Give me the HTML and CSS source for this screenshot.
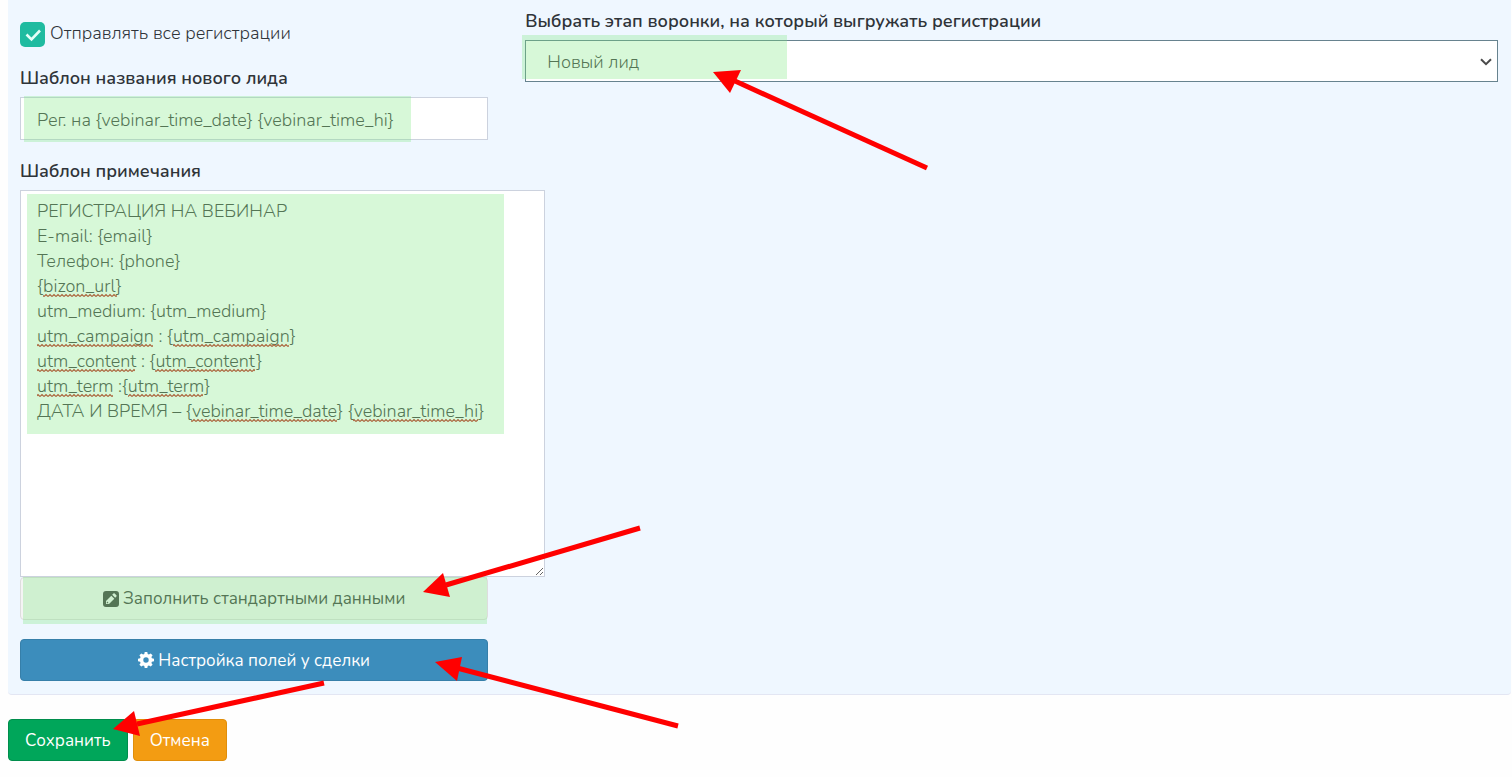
FILE: index.html
```html
<!DOCTYPE html>
<html lang="ru">
<head>
<meta charset="utf-8">
<meta name="viewport" content="width=device-width, initial-scale=1">
<title>Настройка выгрузки регистраций</title>
<link rel="stylesheet" href="styles.css">
</head>
<body>
<main class="page">
  <form class="form">
    <section class="panel">
      <div class="column column-lead">
        <div class="check-row">
          <input class="check" type="checkbox" id="send-all" checked>
          <label for="send-all">Отправлять все регистрации</label>
        </div>
        <div class="field">
          <label class="field-label" for="lead-name">Шаблон названия нового лида</label>
          <div class="control">
            <input class="input" type="text" id="lead-name" value="Рег. на {vebinar_time_date} {vebinar_time_hi}">
            <span class="mark mark-name"></span>
          </div>
        </div>
        <div class="field">
          <label class="field-label" for="note">Шаблон примечания</label>
          <div class="control control-note">
            <textarea class="input note" id="note" spellcheck="false">РЕГИСТРАЦИЯ НА ВЕБИНАР
E-mail: {email}
Телефон: {phone}
{bizon_url}
utm_medium: {utm_medium}
utm_campaign : {utm_campaign}
utm_content : {utm_content}
utm_term :{utm_term}
ДАТА И ВРЕМЯ – {vebinar_time_date} {vebinar_time_hi}</textarea>
            <svg class="spelling" width="525" height="240" aria-hidden="true">
              <defs>
                <pattern id="wave" y="2" width="4" height="5" patternUnits="userSpaceOnUse">
                  <path d="M0 4.500L2 2.500L4 4.500" fill="none" stroke="#c02a20" stroke-width="1.200"/>
                </pattern>
              </defs>
              <g fill="url(#wave)">
                <rect x="23" y="103" width="74" height="4"/>
                <rect x="17" y="153" width="116" height="4"/>
                <rect x="153" y="153" width="116" height="4"/>
                <rect x="17" y="178" width="98" height="4"/>
                <rect x="135" y="178" width="100" height="4"/>
                <rect x="17" y="203" width="76" height="4"/>
                <rect x="108" y="203" width="75" height="4"/>
                <rect x="171" y="228" width="146" height="4"/>
                <rect x="333" y="228" width="125" height="4"/>
              </g>
            </svg>
            <span class="mark mark-note"></span>
          </div>
          <div class="control">
            <button class="btn btn-default btn-block" type="button">
              <svg class="icon" viewBox="0 0 16 16" aria-hidden="true"><path fill="currentColor" fill-rule="evenodd" d="M3 0h10a3 3 0 0 1 3 3v10a3 3 0 0 1-3 3H3a3 3 0 0 1-3-3V3a3 3 0 0 1 3-3zM3 10v3h3l5.300-5.300-3-3zM9.200 3.800l3 3 1.200-1.200a1 1 0 0 0 0-1.300l-1.700-1.700a1 1 0 0 0-1.300 0zM4.200 10.600l1.300 1.300-.5.400H3.800v-1.200z"/></svg>
              Заполнить стандартными данными
            </button>
            <span class="mark mark-fill"></span>
          </div>
        </div>
        <button class="btn btn-primary btn-block" type="button">
          <svg class="icon" viewBox="0 0 16 16" aria-hidden="true"><path fill="currentColor" fill-rule="evenodd" d="M6.700 0h2.600l.4 2.100 1.200.5L12.700 1.400l1.900 1.900-1.200 1.800.5 1.200 2.100.4v2.600l-2.100.4-.5 1.200 1.200 1.800-1.900 1.900-1.800-1.200-1.200.5L9.300 16H6.700l-.4-2.100-1.200-.5-1.800 1.200-1.900-1.900 1.200-1.800-.5-1.200L0 9.300V6.700l2.100-.4.5-1.200L1.400 3.300l1.900-1.900 1.800 1.200 1.200-.5zM8 5.300a2.700 2.700 0 1 0 0 5.400 2.700 2.700 0 0 0 0-5.400z"/></svg>
          Настройка полей у сделки
        </button>
      </div>
      <div class="column">
        <div class="field">
          <label class="field-label" for="stage">Выбрать этап воронки, на который выгружать регистрации</label>
          <div class="control">
            <select class="select" id="stage"><option>Новый лид</option></select>
            <svg class="chevron" width="12" height="8" viewBox="0 0 12 8" aria-hidden="true"><path d="M1 1.200L6 6.200L11 1.200" fill="none" stroke="#4a4a4a" stroke-width="2"/></svg>
            <span class="mark mark-stage"></span>
          </div>
        </div>
      </div>
    </section>
    <div class="actions">
      <button class="btn btn-success" type="submit">Сохранить</button>
      <button class="btn btn-warning" type="button">Отмена</button>
    </div>
  </form>
  <svg class="arrows" width="940" height="740" aria-hidden="true">
    <g stroke="#f00" stroke-width="5">
      <path d="M927 168L735 81"/>
      <path d="M640 528L446 585"/>
      <path d="M678 726L457 668"/>
      <path d="M324 683L137 724"/>
    </g>
    <g fill="#f00">
      <path d="M713 72L741 70L730 93z"/>
      <path d="M423 592L443 573L450 597z"/>
      <path d="M435 662L462 657L457 681z"/>
      <path d="M113 729L134 711L140 736z"/>
    </g>
  </svg>
</main>
</body>
</html>
```

FILE: styles.css
```css
* { box-sizing: border-box; }

body {
  margin: 0;
  background: #fefefe;
  color: #2f3439;
  font: 300 18px/25px Nunito, Lato, "Open Sans", sans-serif;
}

.page { position: relative; }
.form { padding: 0 1px 16px 8px; }

.panel {
  display: grid;
  grid-template-columns: 13fr 27fr;
  gap: 37px;
  padding: 9px 13px 13px 12px;
  background: #eff7ff;
  border-bottom: 1px solid #e3e6f3;
  border-radius: 0 0 4px 4px;
}

.column { min-width: 0; }
.column-lead { padding-top: 12px; }

.check-row {
  display: flex;
  align-items: flex-start;
  gap: 5px;
  margin-bottom: 19px;
}

.check {
  appearance: none;
  flex: none;
  width: 25px;
  height: 25px;
  margin: 1px 0 0;
  border-radius: 5px;
  background: #1fbba0 url("data:image/svg+xml,%3Csvg xmlns='http://www.w3.org/2000/svg' viewBox='0 0 25 25'%3E%3Cpath d='M6.500 12.500L11.500 17.500L20 8.500' fill='none' stroke='%23e4fff8' stroke-width='2.600'/%3E%3C/svg%3E") center / 25px 25px no-repeat;
}

.field { margin-bottom: 19px; }

.field-label {
  display: block;
  margin-bottom: 6px;
  font-weight: 600;
}

.control { position: relative; }

.input,
.select {
  display: block;
  width: 100%;
  height: 43px;
  margin: 0;
  padding: 9px 16px 7px;
  border: 1px solid #ccd2de;
  border-radius: 0;
  background: #fff;
  color: #444;
  font: inherit;
}

.control-note { width: 525px; }

.note {
  height: 387px;
  padding: 8px 16px;
  resize: both;
}

.select {
  appearance: none;
  height: 42px;
  padding: 2px 21px 0;
  border-color: #67838f;
}

.chevron {
  position: absolute;
  top: 18px;
  right: 6px;
  pointer-events: none;
}

.btn {
  display: inline-flex;
  align-items: center;
  justify-content: center;
  gap: 4px;
  height: 42px;
  padding: 0 16px;
  border: 1px solid;
  border-radius: 4px;
  color: #fff;
  font: inherit;
  font-size: 17px;
  font-weight: 400;
}

.btn-block { display: flex; width: 100%; }
.btn-default { height: 43px; background: #f4f4f4; border-color: #ddd; color: #444; }
.btn-primary { background: #3c8dbc; border-color: #367fa9; }
.btn-success { background: #00a65a; border-color: #008d4c; }
.btn-warning { background: #f39c12; border-color: #e08e0b; }

.icon { width: 16px; height: 16px; }

.actions {
  display: flex;
  gap: 5px;
  margin-top: 24px;
}

.spelling,
.mark,
.arrows {
  position: absolute;
  pointer-events: none;
}

.spelling { top: 0; left: 0; }
.mark { background: rgba(122, 232, 125, .3); }
.mark-name { top: -1px; left: 4px; width: 387px; height: 46px; }
.mark-note { top: 4px; left: 7px; width: 477px; height: 240px; }
.mark-fill { top: 0; left: 3px; right: 1px; height: 47px; }
.mark-stage { top: -5px; left: -3px; width: 265px; height: 44px; }
.arrows { top: 0; left: 0; }
```
